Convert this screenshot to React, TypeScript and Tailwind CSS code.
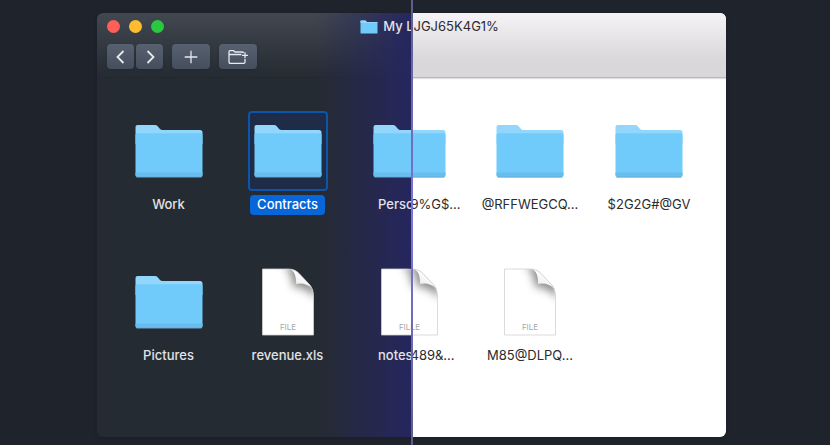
import { useId, useState } from 'react';

interface Item {
  name: string;
  kind: 'folder' | 'file';
}

const plainRows: Item[][] = [
  [
    { name: 'Work', kind: 'folder' },
    { name: 'Contracts', kind: 'folder' },
    { name: 'Perso', kind: 'folder' },
  ],
  [
    { name: 'Pictures', kind: 'folder' },
    { name: 'revenue.xls', kind: 'file' },
    { name: 'notes', kind: 'file' },
  ],
];

const encryptedRows: Item[][] = [
  [
    { name: '9%G$...', kind: 'folder' },
    { name: '@RFFWEGCQ...', kind: 'folder' },
    { name: '$2G2G#@GV', kind: 'folder' },
  ],
  [
    { name: '489&...', kind: 'file' },
    { name: 'M85@DLPQ...', kind: 'file' },
  ],
];

function FolderIcon() {
  return (
    <svg width="68" height="54" viewBox="0 0 68 54" className="shrink-0" aria-hidden="true">
      <path d="M0.5 3Q0.5 1 2.5 1H20Q21.500 1 22.500 2.100L25 5Q26 6 27.500 6H65Q67.500 6 67.500 8.500V20H0.5Z" fill="#92d6fb" />
      <path d="M0.5 11Q0.5 9.200 2.300 9.200H65.700Q67.500 9.200 67.500 11V51Q67.500 53 65.500 53H2.5Q0.5 53 0.5 51Z" fill="#71cbfa" />
      <path d="M0.5 48.500H67.500V51Q67.500 53 65.500 53H2.5Q0.5 53 0.5 51Z" fill="#68bdee" />
      <path d="M1.500 53.300H66.500" stroke="#6198b9" strokeWidth="0.7" />
    </svg>
  );
}

function FileIcon() {
  const id = useId();
  return (
    <svg width="52" height="68" viewBox="0 0 52 68" className="shrink-0" aria-hidden="true">
      <defs>
        <clipPath id={`${id}-page`}>
          <path d="M0.5 1H26Q33 1 37 5.500L46 15Q51.500 20 51.500 28V67H0.5Z" />
        </clipPath>
        <filter id={`${id}-soft`} x="-60%" y="-60%" width="220%" height="220%">
          <feGaussianBlur stdDeviation="4" />
        </filter>
        <linearGradient id={`${id}-curl`} x1="0.6" y1="0.2" x2="0.2" y2="1">
          <stop offset="0" stopColor="#ffffff" />
          <stop offset="0.6" stopColor="#f2f2f2" />
          <stop offset="1" stopColor="#c4c4c4" />
        </linearGradient>
      </defs>
      <path d="M0.5 1H26Q33 1 37 5.500L46 15Q51.500 20 51.500 28V67H0.5Z" fill="#fff" />
      <g clipPath={`url(#${id}-page)`}>
        <path d="M21 -2Q30 2 31 19Q44 18 54 31V8L36 -4Z" fill="#666" opacity="0.75" filter={`url(#${id}-soft)`} />
      </g>
      <path d="M29 1.500Q34.500 5 34 16Q43 14 49.500 20Q48 17 46 15L37 5.500Q33 1.500 29 1.500Z" fill={`url(#${id}-curl)`} />
      <path d="M0.5 1H26Q33 1 37 5.500L46 15Q51.500 20 51.500 28V67H0.5Z" fill="none" stroke="#d2d2d2" strokeWidth="0.8" />
      <text x="26" y="62" textAnchor="middle" fontSize="8" fill="#a6a6a9" className="font-['Inter',sans-serif] font-normal">
        FILE
      </text>
    </svg>
  );
}

function ItemIcon({ kind }: { kind: Item['kind'] }) {
  return kind === 'folder' ? <FolderIcon /> : <FileIcon />;
}

function ToolbarIcon({ children }: { children: React.ReactNode }) {
  return (
    <svg width="20" height="16" viewBox="0 0 20 16" fill="none" stroke="#e6e9ee" strokeWidth="1.5" aria-hidden="true">
      {children}
    </svg>
  );
}

const toolButton =
  'flex h-[25px] items-center justify-center rounded bg-gradient-to-b from-[#586170] to-[#444e5d] shadow-sm';

export default function App() {
  const [selected, setSelected] = useState('Contracts');

  return (
    <main className="relative min-h-screen bg-[#1f232b] pt-[13px] pr-[104px] pb-2 pl-[97px] font-['Inter',sans-serif] text-[13px]">
      <div className="flex overflow-hidden rounded-md shadow-[0_1px_4px_rgba(0,0,0,0.15)]">
        {/* Readable half */}
        <section className="relative w-1/2 overflow-hidden bg-[#252b32] font-medium text-[#e2e2e6]">
          <div className="absolute inset-y-0 right-0 w-24 bg-gradient-to-r from-[#25265f]/0 to-[#25265f]" />
          <header className="h-[65px] border-b border-[#171b20]/70 bg-gradient-to-b from-[#555b64]/60 to-[#252b32]/10 px-[10px] pt-[3px]">
            <div className="relative flex h-5 items-center justify-between">
              <div className="flex gap-[9px]">
                <button aria-label="Close" className="size-[13px] rounded-full bg-[#ff5f57]" />
                <button aria-label="Minimize" className="size-[13px] rounded-full bg-[#ffbd2e]" />
                <button aria-label="Zoom" className="size-[13px] rounded-full bg-[#28c940]" />
              </div>
              <h1 className="-mr-3 flex items-center gap-[5px] pt-[2px] whitespace-nowrap">
                <svg width="18" height="14" viewBox="0 0 18 14" aria-hidden="true">
                  <path d="M0.5 1Q0.5 0.500 1 0.500H5.500L7 2H17Q17.500 2 17.500 2.500V13Q17.500 13.500 17 13.500H1Q0.5 13.500 0.5 13Z" fill="#71cbfa" />
                  <path d="M0.5 1Q0.5 0.500 1 0.500H5.500L7 2H17.500V3H0.5Z" fill="#92d6fb" />
                </svg>
                My L
              </h1>
            </div>
            <div className="relative mt-2 flex">
              <button aria-label="Back" className={`${toolButton} w-[27px]`}>
                <ToolbarIcon>
                  <path d="M12.500 2L6.500 8L12.500 14" strokeWidth="1.8" />
                </ToolbarIcon>
              </button>
              <button aria-label="Forward" className={`${toolButton} ml-[2px] w-[27px]`}>
                <ToolbarIcon>
                  <path d="M7.500 2L13.500 8L7.500 14" strokeWidth="1.8" />
                </ToolbarIcon>
              </button>
              <button aria-label="Add" className={`${toolButton} ml-[9px] w-[38px]`}>
                <ToolbarIcon>
                  <path d="M10 1.700V14.300M3.700 8H16.300" strokeWidth="1.3" />
                </ToolbarIcon>
              </button>
              <button aria-label="New folder" className={`${toolButton} ml-[9px] w-[38px]`}>
                <ToolbarIcon>
                  <path d="M17 10V13Q17 14.300 15.700 14.300H2.300Q1 14.300 1 13V3Q1 1.700 2.300 1.700H5.500L7 3H14Q15.300 3 15.600 4M1 5.500H13.500M17 3.300V9.300M14 6.300H20" strokeWidth="1.3" />
                </ToolbarIcon>
              </button>
            </div>
          </header>
          <div className="relative flex flex-col gap-[47px] pt-[33px] pb-[71px] pl-3">
            {plainRows.map((row, i) => (
              <div key={i} className="flex">
                {row.map((item, col) => {
                  const active = item.name === selected;
                  return (
                    <button
                      key={item.name}
                      onClick={() => setSelected(item.name)}
                      className={`flex shrink-0 flex-col gap-1 ${col === 2 ? 'w-[66px] items-start' : 'w-[119px] items-center'}`}
                    >
                      <span
                        className={`flex h-20 w-20 shrink-0 items-center justify-center rounded border-2 ${
                          active ? 'border-[#0b55ad] bg-[#1f2c47]' : 'border-transparent'
                        } ${col === 2 ? 'ml-5' : ''}`}
                      >
                        <ItemIcon kind={item.kind} />
                      </span>
                      <span
                        className={`rounded px-[7px] pb-[2px] leading-[18px] whitespace-nowrap ${
                          active ? 'bg-[#0866d9] text-white' : ''
                        } ${col === 2 ? 'ml-6' : ''}`}
                      >
                        {item.name}
                      </span>
                    </button>
                  );
                })}
              </div>
            ))}
          </div>
        </section>

        {/* Encrypted half */}
        <section className="w-1/2 overflow-hidden bg-white text-[#2b2b30]">
          <header className="h-[65px] border-b border-[#b9b7ba] bg-gradient-to-b from-[#f5f3f6] to-[#d9d7da] to-75% pt-[3px] shadow-[0_1px_1px_rgba(0,0,0,0.12)]">
            <div className="flex h-5 items-center pt-[2px] pl-[2px]">JGJ65K4G1%</div>
          </header>
          <div className="flex flex-col gap-[47px] pt-[33px] pb-[71px]">
            {encryptedRows.map((row, i) => (
              <div key={i} className="flex">
                {row.map((item, col) => (
                  <div
                    key={item.name}
                    className={`flex shrink-0 flex-col gap-1 ${col === 0 ? 'w-[59px] items-start' : 'w-[119px] items-center'}`}
                  >
                    <span className={`flex h-20 w-20 shrink-0 items-center justify-center ${col === 0 ? '-ml-10' : ''}`}>
                      <ItemIcon kind={item.kind} />
                    </span>
                    <span className={`pb-[2px] leading-[18px] whitespace-nowrap ${col === 0 ? '-ml-px' : ''}`}>{item.name}</span>
                  </div>
                ))}
              </div>
            ))}
          </div>
        </section>
      </div>

      {/* Scan line */}
      <div className="pointer-events-none absolute inset-y-0 right-[104px] left-[97px] flex justify-center">
        <div className="w-[2px] bg-gradient-to-b from-[#5e5d8c] via-[#7b77dc] to-[#5e5d8c]" />
      </div>
    </main>
  );
}
